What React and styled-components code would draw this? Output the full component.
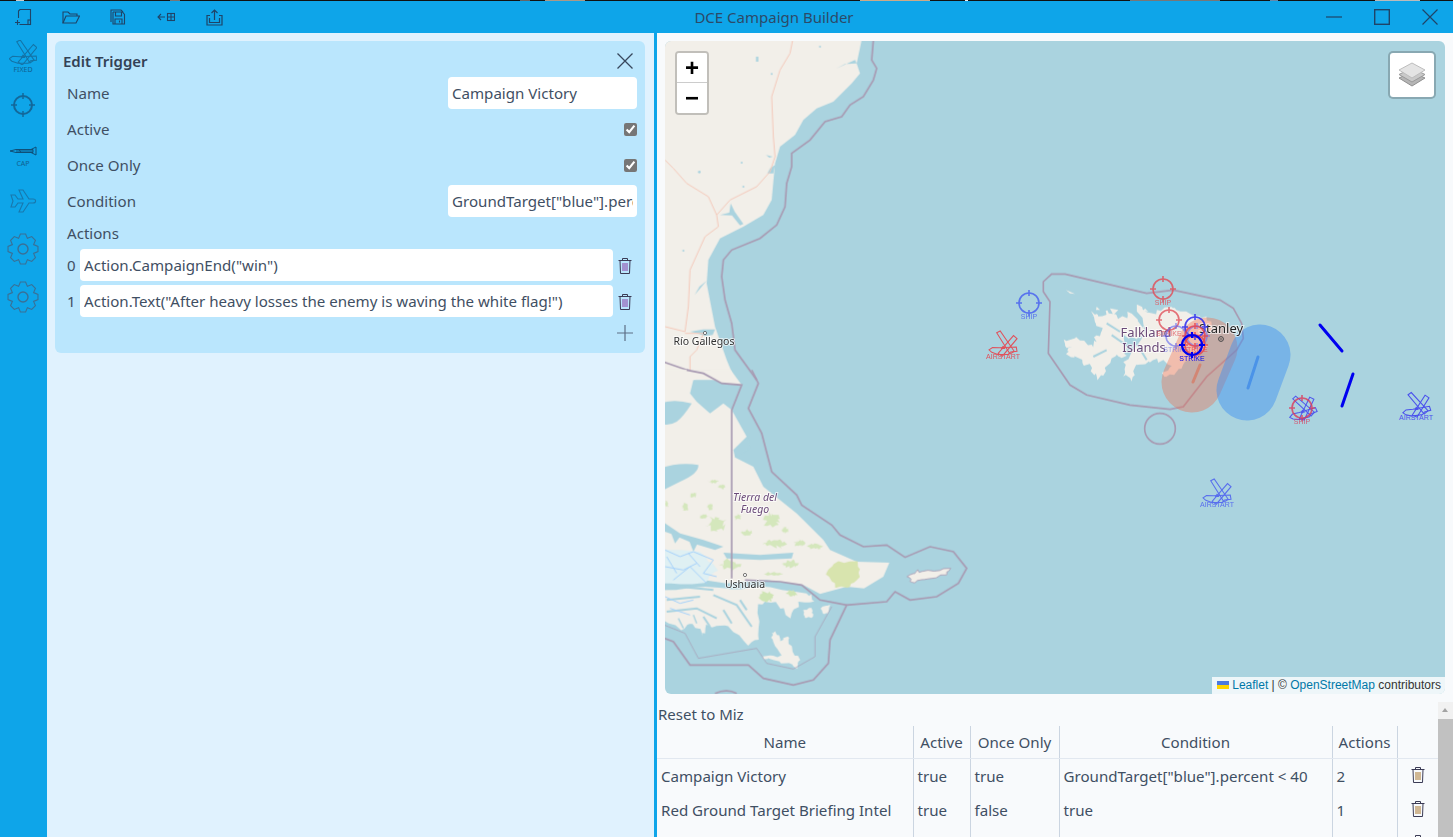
import styled, { createGlobalStyle } from 'styled-components';

const GlobalStyle = createGlobalStyle`
  html, body {
    margin: 0;
    height: 100%;
    overflow: hidden;
    font-family: "Noto Sans", "Open Sans", sans-serif;
    color: #334155;
  }
`;

const ICON = '#1f4468';
const LAND = '#f2efe9';
const WATER = '#aad3df';
const BORDER = '#a89ab2';
const Z4 = 'translate(980 260) scale(.33333)';
const Z8 = 'translate(660 40) scale(.33333)';
const Z9 = 'translate(660 370) scale(.33333)';

const gearPath = (teeth, outer, inner) => {
  const pts = [];
  const step = (Math.PI * 2) / teeth;
  for (let i = 0; i < teeth; i++) {
    const a = i * step - Math.PI / 2;
    [[-0.5, inner], [-0.22, outer], [0.22, outer], [0.5, inner]].forEach(([o, r]) => {
      pts.push(`${(16 + r * Math.cos(a + o * step)).toFixed(2)},${(16 + r * Math.sin(a + o * step)).toFixed(2)}`);
    });
  }
  return `M${pts.join('L')}Z`;
};

// rough up a polygon so coastlines don't look ruled
const jag = (points, amp, seed = 7) => {
  const list = points.trim().split(/\s+/).map((s) => s.split(',').map(Number));
  let n = seed;
  const rnd = () => {
    n = (n * 9301 + 49297) % 233280;
    return n / 233280 - 0.5;
  };
  const out = [];
  list.forEach((p, i) => {
    const q = list[(i + 1) % list.length];
    for (let t = 0; t < 4; t++) {
      const x = p[0] + ((q[0] - p[0]) * t) / 4 + rnd() * amp;
      const y = p[1] + ((q[1] - p[1]) * t) / 4 + rnd() * amp;
      out.push(`${x.toFixed(1)},${y.toFixed(1)}`);
    }
  });
  return out.join(' ');
};

const patch = (cx, cy, rx, ry) => {
  const pts = [];
  for (let i = 0; i < 6; i++) {
    const a = (i / 6) * Math.PI * 2;
    pts.push(`${cx + rx * Math.cos(a)},${cy + ry * Math.sin(a)}`);
  }
  return jag(pts.join(' '), Math.min(rx, ry) * 0.9, cx + cy);
};

const SCRUB = [
  [170, 462, 24, 24], [130, 440, 12, 6], [150, 410, 8, 12], [75, 410, 9, 10], [100, 375, 10, 6], [160, 335, 14, 5],
  [185, 350, 10, 6], [335, 450, 24, 20], [345, 520, 34, 12], [260, 490, 16, 10], [420, 520, 15, 10], [465, 530, 22, 8],
  [375, 480, 10, 8], [235, 442, 10, 8], [390, 582, 22, 11], [210, 585, 28, 16], [340, 612, 30, 5], [20, 402, 6, 8],
];

const TRIGGERS = [
  { name: 'Campaign Victory', active: 'true', once: 'true', condition: 'GroundTarget["blue"].percent < 40', actions: 2 },
  { name: 'Red Ground Target Briefing Intel', active: 'true', once: 'false', condition: 'true', actions: 1 },
  { name: '', active: '', once: '', condition: '', actions: '' },
];

const ACTIONS = ['Action.CampaignEnd("win")', 'Action.Text("After heavy losses the enemy is waving the white flag!")'];

const Trash = ({ bars = '#8b3fa3' }) => (
  <svg width="16" height="17" viewBox="0 0 16 17" fill="none" stroke="#3b3b55" strokeWidth="1">
    <path d="M1.5 3.5h13M5.5 3.5v-2h5v2M3 3.5l.5 13h9l.5-13" />
    <path d="M6 6v8M8 6v8M10 6v8" stroke={bars} />
  </svg>
);

const JetShape = () => (
  <>
    <path d="M22 5L32 0L72 58L60 66Z" />
    <path d="M80 22L70 13L26 64L38 72Z" />
    <path d="M0 54L10 47L30 48L78 46L80 58L62 60L55 67L25 67L8 61Z" />
    <path d="M36 50l4-6l4 6z" />
  </>
);

const Target = ({ x, y, label, color, fade = 1, width = 1.6 }) => (
  <g opacity={fade} stroke={color} fill="none">
    <circle cx={x} cy={y} r="10" strokeWidth={width} />
    <path d={`M${x} ${y - 13}v6M${x} ${y + 7}v6M${x - 13} ${y}h6M${x + 7} ${y}h6`} strokeWidth={width} />
    <MarkerText x={x} y={y + 16} fill={color}>{label}</MarkerText>
  </g>
);

const Jet = ({ x, y, label, color, turn = 0, fade = 1 }) => (
  <g opacity={fade}>
    <g
      transform={`translate(${x - 14} ${y - 14}) rotate(${turn} 14 14) scale(.35)`}
      fill="none"
      stroke={color}
      strokeWidth="3"
    >
      <JetShape />
    </g>
    <MarkerText x={x} y={y + 14} fill={color}>{label}</MarkerText>
  </g>
);

const WorldMap = () => (
  <MapSvg viewBox="665 41 780 653">
    <rect x="665" y="41" width="780" height="653" fill={WATER} />

    <BaseLayer>
      <g transform={Z8}>
        <polygon
          fill={LAND}
          points="0,0 605,0 590,70 600,100 575,130 520,185 470,205 430,240 405,285 360,320 345,370 335,480 310,525 250,560 180,595 145,660 140,730 165,860 200,960 225,1020 0,1020"
        />
        <g fill={WATER}>
          <polygon points="212,490 224,515 250,552 240,556 216,526 180,525 208,518" />
          <polygon points="140,722 104,765 118,740" />
          <polygon points="90,875 130,868 165,868 158,885 135,888 105,878" />
          <polygon points="318,345 338,350 328,353" />
          <polygon points="345,375 340,400 322,400 330,385" />
          <polygon points="530,85 585,60 590,70 555,72" />
          <polygon points="288,50 295,50 295,65 288,65" />
          <circle cx="118" cy="396" r="4" />
          <circle cx="335" cy="102" r="3" />
          <circle cx="70" cy="632" r="3" />
          <circle cx="250" cy="440" r="3" />
          <circle cx="245" cy="368" r="3" />
          <circle cx="480" cy="20" r="3" />
        </g>
        <g fill="none" stroke="#f5c9ba" strokeWidth="3">
          <path d="M398 0L390 40L360 90L335 170L340 290L345 350L330 395L290 440L210 480L170 525L145 470L80 430L40 385L15 360" />
          <path d="M170 525L175 560L135 590L90 690L85 800L75 875L15 860" />
          <path d="M75 880L130 880L110 930L90 950L90 1020" />
        </g>
        <g fill="none" stroke={BORDER} strokeWidth="5">
          <path d="M640 0L635 60L650 85L640 120L610 170L570 195L545 230L495 245L450 300L395 340L395 380L380 430L375 500L350 555L300 595L215 630L190 660L185 710L195 780L215 850L225 930L290 1020" />
          <path d="M0 962L95 995L150 995L185 1020" />
        </g>
      </g>

      <g transform={Z9}>
        <polygon
          fill={LAND}
          points="0,0 212,0 245,45 190,40 130,18 100,30 90,70 110,95 150,130 190,100 215,120 260,200 220,240 225,262 280,290 310,350 410,430 490,510 510,540 590,575 688,578 670,620 612,655 560,650 480,672 430,645 320,630 200,640 100,625 0,640"
        />
        <g fill={WATER}>
          <path d="M0 100Q40 85 95 100Q70 140 50 155Q25 170 0 160Z" />
          <path d="M0 295Q60 275 115 285Q118 310 60 335Q20 355 0 365Z" />
          <polygon points="0,450 60,490 130,510 190,530 165,540 100,520 30,490 0,480" />
          <polygon points="190,548 300,555 400,548 395,565 300,570 200,565" />
          <polygon points="222,240 264,200 270,235 232,262" />
          <polygon points="30,480 45,520 60,500" />
          <polygon points="85,505 100,545 115,515" />
        </g>
        <polygon fill="#dff0f3" points={jag('0,540 120,545 170,600 130,640 0,640', 10, 3)} />
        <g fill="none" stroke="#a6d2fb" strokeWidth="3">
          <path d="M15 540L60 560L100 545L160 570L130 610L170 620" />
          <path d="M15 590L70 600L110 580M40 630L90 590L140 640M20 560L50 610M85 550L120 590" />
        </g>
        <g fill="#cfe5b4" fillOpacity=".85">
          {SCRUB.map(([cx, cy, rx, ry]) => (
            <polygon key={`${cx}-${cy}`} points={patch(cx, cy, rx, ry)} />
          ))}
        </g>
        <polygon fill="#d8e4ae" points={jag('520,578 590,575 600,620 570,650 530,655 495,610', 10, 11)} />
        <polygon
          fill={LAND}
          points={jag('0,655 190,655 300,650 440,665 460,690 420,700 390,740 350,700 290,700 300,800 270,820 210,770 140,770 130,800 100,760 60,775 0,750', 14, 5)}
        />
        <g fill="none" stroke={WATER} strokeWidth="6">
          <path d="M160 675L230 705L275 770" />
          <path d="M20 690L120 680M20 725L110 715L170 745" />
          <path d="M60 650L160 660M190 720L215 760M130 740L150 770M240 690L260 720" />
          <path d="M55 745L70 775M100 735L110 760" strokeWidth="4" />
        </g>
        <g fill="none" stroke="#a6d2fb" strokeWidth="3">
          <path d="M15 680L60 700L100 690M30 715L90 735" />
        </g>
        <g fill="#cfe5b4">
          <polygon points={patch(320, 680, 24, 14)} />
          <polygon points={patch(395, 670, 15, 12)} />
        </g>
        <g fill={LAND}>
          <polygon points={jag('335,790 348,785 360,810 385,800 395,835 420,870 410,892 380,878 330,870 310,860 370,860 340,815', 10, 9)} />
          <polygon points={jag('428,720 455,715 460,740 435,745', 5, 13)} />
          <polygon points={jag('482,712 510,705 505,730 488,730', 5, 17)} />
        </g>
        <polygon
          fill={LAND}
          stroke={BORDER}
          strokeWidth="2.5"
          points={jag('745,622 770,602 800,604 870,597 860,615 790,625 755,640', 9, 21)}
        />
        <g fill="none" stroke={BORDER} strokeWidth="5">
          <path d="M275 0L295 40L265 115L305 190L335 305L410 375L425 405L515 465L540 495L610 530L680 525L735 562L810 530L880 545L920 595L895 640L830 680L750 690L705 665L680 695L560 705L510 810L505 880L460 930L400 945L310 925L265 885L90 885L40 815L0 800" />
          <path d="M560 705L480 690L425 645L360 635L255 630" />
          <path d="M215 625L215 120L245 45L185 40L130 10L80 0" />
          <path d="M165 970Q200 955 230 970" />
        </g>
        <path d="M0 760L75 790L115 865L290 835L320 880L400 897L465 860L465 800L515 710" fill="none" stroke={BORDER} strokeWidth="2" />
      </g>

      <g transform={Z4}>
        <g fill={LAND}>
          <polygon points={jag('335,160 360,170 385,150 420,175 450,160 480,190 500,215 480,235 430,230 440,290 400,290 370,340 345,358 335,320 300,300 260,285 270,265 250,240 290,235 340,260 345,235 370,215 340,180', 16, 4)} />
          <polygon points={jag('470,135 510,160 560,150 585,140 625,160 680,170 700,210 660,230 680,260 640,300 600,325 560,355 545,345 570,310 530,300 490,310 470,320 450,360 430,340 440,300 500,215', 16, 8)} />
          <polygon points="258,90 285,102 270,100" />
          <polygon points="350,140 360,150 348,150" />
          <polygon points="390,145 415,150 400,165" />
          <polygon points="495,145 505,155 490,152" />
        </g>
        <path d="M395 225L445 260M380 190L420 215M470 250L500 300M340 290L380 270" fill="none" stroke={WATER} strokeWidth="6" />
        <path
          d="M215 42L255 42L500 100L580 90L720 120L760 145L785 190L790 235L770 270L680 350L610 440L570 448L450 435L320 405L270 375L205 280L210 125L190 95L190 65Z"
          fill="none"
          stroke={BORDER}
          strokeWidth="5"
        />
        <circle cx="540" cy="506" r="46" fill="none" stroke={BORDER} strokeWidth="5" />
      </g>
    </BaseLayer>

    <MapLabel x="704" y="345" $size={10.5}>Río Gallegos</MapLabel>
    <MapLabel x="1146" y="337" $size={13} $tint="#6a4a78">Falkland</MapLabel>
    <MapLabel x="1144" y="352" $size={13} $tint="#6a4a78">Islands</MapLabel>
    <MapLabel x="755" y="501" $size={10.5} $tint="#6a4a78" $italic>Tierra del</MapLabel>
    <MapLabel x="755" y="513" $size={10.5} $tint="#6a4a78" $italic>Fuego</MapLabel>
    <MapLabel x="745" y="588" $size={10.5}>Ushuaia</MapLabel>
    <circle cx="705" cy="333" r="1.6" fill="#fff" stroke="#444" strokeWidth=".7" />
    <circle cx="745" cy="575" r="1.6" fill="#fff" stroke="#444" strokeWidth=".7" />

    <g strokeLinecap="round" fill="none">
      <path d="M1207 348L1192 382" stroke="#ef6c4d" strokeOpacity=".38" strokeWidth="61" />
      <path d="M1260 355L1247 390" stroke="#3b8df2" strokeOpacity=".45" strokeWidth="61" />
      <path d="M1258 357L1248 388" stroke="#4b93e8" strokeWidth="3" />
      <path d="M1200 365L1193 382" stroke="#d9765f" strokeOpacity=".7" strokeWidth="3" />
      <path d="M1320 325L1342 351M1353 374L1342 406" stroke="#0000f0" strokeWidth="3" />
    </g>

    <MapLabel x="1221" y="333" $size={13} $tint="#222">Stanley</MapLabel>
    <circle cx="1221" cy="339" r="2.4" fill="none" stroke="#444" />
    <circle cx="1221" cy="339" r=".8" fill="#444" />

    <Target x={1029} y={303} label="SHIP" color="#4a63f0" fade={0.85} />
    <Target x={1163} y={289} label="SHIP" color="#e0525c" fade={0.85} />
    <Target x={1169} y={320} label="STRIKE" color="#e0525c" fade={0.8} />
    <Target x={1176} y={336} label="STRIKE" color="#5a62f0" fade={0.6} />
    <Target x={1195} y={327} label="" color="#2a2af0" fade={0.85} />
    <Target x={1197} y={336} label="" color="#6a6af0" fade={0.6} />
    <Target x={1195} y={336} label="STRIKE" color="#e8404a" fade={0.8} />
    <Target x={1195} y={345} label="" color="#e8404a" fade={0.8} />
    <Target x={1192} y={345} label="STRIKE" color="#0000f0" width={2.2} />
    <Jet x={1003} y={345} label="AIRSTART" color="#e0525c" />
    <Jet x={1416} y={406} label="AIRSTART" color="#3a3af0" turn={-8} fade={0.85} />
    <Jet x={1217} y={493} label="AIRSTART" color="#4a5cf0" fade={0.85} />
    <Jet x={1302} y={409} label="" color="#3a3af0" turn={-15} fade={0.8} />
    <Target x={1302} y={408} label="SHIP" color="#dc3a5a" fade={0.8} />
  </MapSvg>
);

const App = () => (
  <>
    <GlobalStyle />
    <Shell>
      <TopStrip />
      <TitleBar>
        <ToolGroup>
          <ToolButton>
            <svg width="18" height="18" viewBox="0 0 18 18" fill="none" stroke={ICON} strokeWidth="1.1">
              <path d="M6 1.5H16.5V16.5H5.5M16.5 14V16.5" />
              <path d="M6 1.5L4.5 3V10" />
              <path d="M1 14.5H6M3.5 12V17" />
              <rect x="14" y="12" width="2.5" height="4.5" />
            </svg>
          </ToolButton>
          <ToolButton>
            <svg width="18" height="14" viewBox="0 0 18 14" fill="none" stroke={ICON} strokeWidth="1.1">
              <path d="M1 13V2H6L8 4H15V6" />
              <path d="M1 13L4 6H17.5L14 13Z" />
            </svg>
          </ToolButton>
          <ToolButton>
            <svg width="16" height="16" viewBox="0 0 16 16" fill="none" stroke={ICON} strokeWidth="1.1">
              <path d="M3 3V15H14.5V5.5L12.5 3H3" />
              <path d="M1 13V1H11L13 3" />
              <path d="M5.5 3V7H11.5V3M5 15V10H12V15M9.5 11.5V13.5" />
            </svg>
          </ToolButton>
          <ToolButton>
            <svg width="18" height="10" viewBox="0 0 18 10" fill="none" stroke={ICON} strokeWidth="1.1">
              <path d="M1 5H8M4 2L1 5L4 8" />
              <rect x="10.5" y="1.5" width="7" height="7" />
              <path d="M14 1.5V8.5M10.5 5H17.5" />
            </svg>
          </ToolButton>
          <ToolButton>
            <svg width="17" height="17" viewBox="0 0 17 17" fill="none" stroke={ICON} strokeWidth="1.2">
              <path d="M4 6.5H1V16H16V6.5H13" />
              <path d="M3.5 9V13.5H13.5V9" />
              <path d="M8.5 11V1M5.5 4L8.5 1L11.5 4" />
            </svg>
          </ToolButton>
        </ToolGroup>
        <WindowTitle>DCE Campaign Builder</WindowTitle>
        <WindowControls>
          <ToolButton>
            <svg width="16" height="16" viewBox="0 0 16 16" stroke={ICON} strokeWidth="1.2">
              <path d="M0 8H16" />
            </svg>
          </ToolButton>
          <ToolButton>
            <svg width="16" height="16" viewBox="0 0 16 16" fill="none" stroke={ICON} strokeWidth="1.4">
              <rect x=".7" y=".7" width="14.6" height="14.6" />
            </svg>
          </ToolButton>
          <ToolButton>
            <svg width="16" height="16" viewBox="0 0 16 16" stroke={ICON} strokeWidth="1.2">
              <path d="M.5 .5L15.5 15.5M15.5 .5L.5 15.5" />
            </svg>
          </ToolButton>
        </WindowControls>
      </TitleBar>

      <Body>
        <Sidebar>
          <SideItem>
            <svg width="28" height="25" viewBox="0 0 80 72" fill="none" stroke="#1473a6" strokeWidth="3">
              <JetShape />
            </svg>
            <SideLabel $gap="1px">FIXED</SideLabel>
          </SideItem>
          <SideItem>
            <svg width="24" height="24" viewBox="0 0 24 24" fill="none" stroke="#13689a" strokeWidth="2">
              <circle cx="12" cy="12" r="9" />
              <path d="M12 0V6M12 18V24M0 12H6M18 12H24" strokeWidth="1.5" />
            </svg>
          </SideItem>
          <SideItem $shift="8px">
            <svg width="28" height="10" viewBox="0 0 28 10" fill="none" stroke="#0f4f78" strokeWidth="1">
              <path d="M1 5L7 3.5H24V6.5H7Z" />
              <path d="M7 5H24M22 3.5L27 1V9L22 6.5M10 3.5L12 6.5" />
            </svg>
            <SideLabel $gap="4px">CAP</SideLabel>
          </SideItem>
          <SideItem>
            <svg width="27" height="24" viewBox="0 0 27 24" fill="none" stroke="#1878ad" strokeWidth="1.1">
              <path d="M1 6L5 6L8 10L13 10L9 1L13 1L19 10L23 10C26.5 10 26.5 14 23 14L19 14L13 23L9 23L13 14L8 14L5 18L1 18L3 12Z" />
            </svg>
          </SideItem>
          {[0, 1].map((n) => (
            <SideItem key={n}>
              <svg width="32" height="32" viewBox="0 0 32 32" fill="none" stroke="#3a7096" strokeWidth="1.1">
                <path d={gearPath(8, 15.2, 11.5)} />
                <circle cx="16" cy="16" r="5" strokeWidth="1.4" />
              </svg>
            </SideItem>
          ))}
        </Sidebar>

        <LeftPane>
          <Card>
            <CardHeader>
              <CardTitle>Edit Trigger</CardTitle>
              <IconButton>
                <svg width="18" height="18" viewBox="0 0 18 18" stroke="#37475c" strokeWidth="1.3">
                  <path d="M1.5 1.5L16.5 16.5M16.5 1.5L1.5 16.5" />
                </svg>
              </IconButton>
            </CardHeader>
            <FieldRow>
              <FieldLabel>Name</FieldLabel>
              <TextInput defaultValue="Campaign Victory" $width="189px" />
            </FieldRow>
            <FieldRow>
              <FieldLabel>Active</FieldLabel>
              <Check type="checkbox" defaultChecked />
            </FieldRow>
            <FieldRow>
              <FieldLabel>Once Only</FieldLabel>
              <Check type="checkbox" defaultChecked />
            </FieldRow>
            <FieldRow>
              <FieldLabel>Condition</FieldLabel>
              <TextInput defaultValue={'GroundTarget["blue"].percent < 40'} $width="189px" />
            </FieldRow>
            <ActionsLabel>Actions</ActionsLabel>
            {ACTIONS.map((action, i) => (
              <ActionRow key={action}>
                <ActionIndex>{i}</ActionIndex>
                <TextInput defaultValue={action} $width="533px" />
                <IconButton>
                  <Trash />
                </IconButton>
              </ActionRow>
            ))}
            <AddRow>
              <IconButton>
                <svg width="16" height="16" viewBox="0 0 16 16" stroke="#5d6f85" strokeWidth="1.2">
                  <path d="M0 8H16M8 0V16" />
                </svg>
              </IconButton>
            </AddRow>
          </Card>
        </LeftPane>

        <Divider />

        <RightPane>
          <MapPanel>
            <WorldMap />
            <ZoomControl>
              <ZoomButton>+</ZoomButton>
              <ZoomButton>−</ZoomButton>
            </ZoomControl>
            <LayersButton>
              <svg width="28" height="26" viewBox="0 0 28 26">
                <path d="M14 10L27 16L14 24L1 16Z" fill="#b5b5b5" stroke="#8f8f8f" />
                <path d="M14 6L27 12.5L14 20L1 12.5Z" fill="#c9c9c9" stroke="#9a9a9a" />
                <path d="M14 1L27 8L14 16L1 8Z" fill="#e4e4e4" stroke="#bdbdbd" />
              </svg>
            </LayersButton>
            <Attribution>
              <svg width="12" height="8" viewBox="0 0 12 8">
                <rect width="12" height="4" fill="#4C7BE1" />
                <rect y="4" width="12" height="4" fill="#FFD500" />
              </svg>
              <AttributionLink>Leaflet</AttributionLink> | © <AttributionLink>OpenStreetMap</AttributionLink> contributors
            </Attribution>
          </MapPanel>

          <TriggerSection>
            <TriggerList>
              <ResetLink>Reset to Miz</ResetLink>
              <TriggerTable>
                <colgroup>
                  <col width="256" />
                  <col width="57" />
                  <col width="89" />
                  <col width="273" />
                  <col width="65" />
                  <col width="41" />
                </colgroup>
                <thead>
                  <tr>
                    <HeadCell>Name</HeadCell>
                    <HeadCell>Active</HeadCell>
                    <HeadCell>Once Only</HeadCell>
                    <HeadCell>Condition</HeadCell>
                    <HeadCell>Actions</HeadCell>
                    <HeadCell />
                  </tr>
                </thead>
                <tbody>
                  {TRIGGERS.map((t, i) => (
                    <tr key={i}>
                      <Cell>{t.name}</Cell>
                      <Cell>{t.active}</Cell>
                      <Cell>{t.once}</Cell>
                      <Cell>{t.condition}</Cell>
                      <Cell>{t.actions}</Cell>
                      <Cell $center>
                        <Trash bars="#a8742a" />
                      </Cell>
                    </tr>
                  ))}
                </tbody>
              </TriggerTable>
            </TriggerList>
            <ScrollRail>
              <ScrollArrow />
              <ScrollThumb />
            </ScrollRail>
          </TriggerSection>
        </RightPane>
      </Body>
    </Shell>
  </>
);

export default App;

const Shell = styled.div`
  display: flex;
  flex-direction: column;
  width: 1453px;
  height: 837px;
  overflow: hidden;
`;

const TopStrip = styled.div`
  flex: none;
  height: 1px;
  background: linear-gradient(
    to right,
    #111 0 16px,
    #ccc 16px 24px,
    #111 24px 170px,
    #777 170px 180px,
    #111 180px 520px,
    #666 520px 530px,
    #111 530px 545px,
    #a98 545px 585px,
    #111 585px 860px,
    #ca8 860px 930px,
    #111 930px 965px,
    #eee 965px 968px,
    #111 968px 1130px,
    #777 1130px 1220px,
    #111 1220px 1270px,
    #68a 1270px 1278px,
    #111 1278px 1375px,
    #bbb 1375px 1420px,
    #111 1420px
  );
`;

const TitleBar = styled.header`
  flex: none;
  display: flex;
  align-items: center;
  height: 32px;
  background: #0ea5e9;
`;

const ToolGroup = styled.div`
  display: flex;
  width: 239px;
  margin-left: -1px;
`;

const ToolButton = styled.div`
  display: flex;
  align-items: center;
  justify-content: center;
  width: 48px;
  height: 32px;
`;

const WindowTitle = styled.div`
  flex: 1;
  text-align: center;
  font-size: 15px;
  color: #2c4a68;
`;

const WindowControls = styled.div`
  display: flex;
  margin-right: -1px;
`;

const Body = styled.div`
  flex: 1;
  display: flex;
  min-height: 0;
`;

const Sidebar = styled.nav`
  flex: none;
  width: 47px;
  background: #0ea5e9;
`;

const SideItem = styled.div`
  display: flex;
  flex-direction: column;
  align-items: center;
  justify-content: center;
  box-sizing: border-box;
  height: 48px;
  margin-left: -1px;
  padding-top: ${(p) => p.$shift || 0};
`;

const SideLabel = styled.span`
  font-size: 7px;
  line-height: 8px;
  margin-top: ${(p) => p.$gap};
  color: #10618f;
`;

const LeftPane = styled.div`
  flex: none;
  width: 607px;
  padding: 8px 9px 8px 8px;
  box-sizing: border-box;
  background: #e0f2fe;
`;

const Card = styled.section`
  padding: 0 8px 6px;
  border-radius: 6px;
  background: #bae6fd;
`;

const CardHeader = styled.div`
  display: flex;
  align-items: center;
  justify-content: space-between;
  height: 34px;
  padding-top: 6px;
  box-sizing: border-box;
`;

const CardTitle = styled.h2`
  margin: 0;
  font-size: 15px;
  font-weight: 600;
  color: #334155;
`;

const IconButton = styled.div`
  display: flex;
  align-items: center;
  justify-content: center;
  width: 24px;
`;

const FieldRow = styled.div`
  display: flex;
  align-items: center;
  justify-content: space-between;
  height: 36px;
`;

const FieldLabel = styled.label`
  padding-left: 4px;
  font-size: 15.1px;
  color: #3f4f63;
`;

const TextInput = styled.input`
  box-sizing: border-box;
  width: ${(p) => p.$width};
  height: 32px;
  padding: 0 4px;
  border: none;
  border-radius: 4px;
  outline: none;
  background: #fff;
  font: 15.1px "Noto Sans", sans-serif;
  color: #3f4f63;
`;

const Check = styled.input`
  width: 13px;
  height: 13px;
  margin: 0;
  accent-color: #767676;
`;

const ActionsLabel = styled(FieldLabel).attrs({ as: 'div' })`
  height: 28px;
  line-height: 28px;
`;

const ActionRow = styled.div`
  display: flex;
  align-items: center;
  height: 36px;
  padding-left: 4px;
`;

const ActionIndex = styled.span`
  width: 13px;
  font-size: 15px;
  color: #3f4f63;
`;

const AddRow = styled.div`
  display: flex;
  align-items: center;
  justify-content: flex-end;
  height: 28px;
`;

const Divider = styled.div`
  flex: none;
  width: 3px;
  background: #0ea5e9;
`;

const RightPane = styled.div`
  flex: 1;
  min-width: 0;
  overflow: hidden;
  background: #f8fafc;
`;

const MapPanel = styled.div`
  position: relative;
  height: 653px;
  margin: 8px;
  border-radius: 6px;
  overflow: hidden;
`;

const MapSvg = styled.svg`
  display: block;
  width: 780px;
  height: 653px;
`;

const BaseLayer = styled.g`
  filter: blur(0.4px);
`;

const MapLabel = styled.text`
  font-family: "Noto Sans", sans-serif;
  font-size: ${(p) => p.$size}px;
  font-style: ${(p) => (p.$italic ? 'italic' : 'normal')};
  fill: ${(p) => p.$tint || '#333'};
  text-anchor: middle;
  paint-order: stroke;
  stroke: rgba(255, 255, 255, 0.65);
  stroke-width: 2px;
`;

const MarkerText = styled.text`
  font-family: "Liberation Sans", sans-serif;
  font-size: 7px;
  text-anchor: middle;
  stroke: none;
`;

const ZoomControl = styled.div`
  position: absolute;
  top: 10px;
  left: 10px;
  width: 30px;
  border: 2px solid rgba(0, 0, 0, 0.2);
  border-radius: 4px;
  background-clip: padding-box;
`;

const ZoomButton = styled.div`
  height: 30px;
  background: #fff;
  text-align: center;
  font: bold 24px/30px "Liberation Sans", sans-serif;
  color: #000;

  &:first-child {
    height: 29px;
    border-bottom: 1px solid #ccc;
    border-radius: 2px 2px 0 0;
  }

  &:last-child {
    border-radius: 0 0 2px 2px;
  }
`;

const LayersButton = styled.div`
  position: absolute;
  top: 10px;
  right: 9px;
  display: flex;
  align-items: center;
  justify-content: center;
  width: 44px;
  height: 44px;
  border: 2px solid rgba(0, 0, 0, 0.2);
  border-radius: 5px;
  background: #fff;
  background-clip: padding-box;
`;

const Attribution = styled.div`
  position: absolute;
  right: 0;
  bottom: 0;
  padding: 0 4px 0 5px;
  background: rgba(255, 255, 255, 0.8);
  font: 12px/17px "Liberation Sans", sans-serif;
  color: #333;

  svg {
    margin-right: 3px;
  }
`;

const AttributionLink = styled.span`
  color: #0078a8;
`;

const TriggerSection = styled.div`
  display: flex;
  height: 135px;
  overflow: hidden;
`;

const TriggerList = styled.div`
  flex: 1;
  min-width: 0;
`;

const ScrollRail = styled.div`
  flex: none;
  display: flex;
  flex-direction: column;
  width: 15px;
  background: #f1f1f1;
`;

const ScrollArrow = styled.div`
  flex: none;
  box-sizing: border-box;
  width: 15px;
  height: 17px;
  padding: 0;
  position: relative;

  &::after {
    content: '';
    position: absolute;
    top: 6px;
    left: 4px;
    border-left: 3.5px solid transparent;
    border-right: 3.5px solid transparent;
    border-bottom: 4px solid #a3a3a3;
  }
`;

const ScrollThumb = styled.div`
  flex: 1;
  background: #c1c1c1;
`;

const ResetLink = styled.div`
  height: 24px;
  padding-left: 1px;
  line-height: 24px;
  font-size: 15px;
  color: #3f4f63;
`;

const TriggerTable = styled.table`
  width: 781px;
  table-layout: fixed;
  border-collapse: collapse;
  font-size: 15.1px;
  color: #3f4f63;
`;

const HeadCell = styled.th`
  height: 32px;
  padding: 0 4px;
  border-bottom: 1px solid #e2e8f0;
  border-left: 1px solid #cbd5e1;
  font-weight: 400;
  white-space: nowrap;

  &:first-child {
    border-left: none;
  }
`;

const Cell = styled.td`
  height: 34px;
  padding: 0 4px;
  border-left: 1px solid #cbd5e1;
  text-align: ${(p) => (p.$center ? 'center' : 'left')};
  white-space: nowrap;

  &:first-child {
    border-left: none;
  }
`;
